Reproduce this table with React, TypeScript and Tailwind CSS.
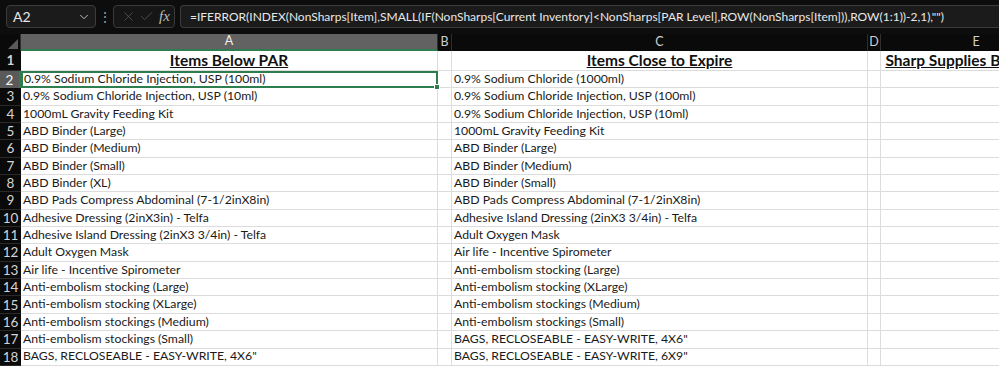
import { ChevronDown, X, Check } from "lucide-react";

const below = [
  "0.9% Sodium Chloride Injection, USP (100ml)",
  "0.9% Sodium Chloride Injection, USP (10ml)",
  "1000mL Gravity Feeding Kit",
  "ABD Binder (Large)",
  "ABD Binder (Medium)",
  "ABD Binder (Small)",
  "ABD Binder (XL)",
  "ABD Pads Compress Abdominal (7-1/2inX8in)",
  "Adhesive Dressing (2inX3in) - Telfa",
  "Adhesive Island Dressing (2inX3 3/4in) - Telfa",
  "Adult Oxygen Mask",
  "Air life - Incentive Spirometer",
  "Anti-embolism stocking (Large)",
  "Anti-embolism stocking (XLarge)",
  "Anti-embolism stockings (Medium)",
  "Anti-embolism stockings (Small)",
  'BAGS, RECLOSEABLE - EASY-WRITE, 4X6"',
];

const expire = [
  "0.9% Sodium Chloride (1000ml)",
  "0.9% Sodium Chloride Injection, USP (100ml)",
  "0.9% Sodium Chloride Injection, USP (10ml)",
  "1000mL Gravity Feeding Kit",
  "ABD Binder (Large)",
  "ABD Binder (Medium)",
  "ABD Binder (Small)",
  "ABD Pads Compress Abdominal (7-1/2inX8in)",
  "Adhesive Island Dressing (2inX3 3/4in) - Telfa",
  "Adult Oxygen Mask",
  "Air life - Incentive Spirometer",
  "Anti-embolism stocking (Large)",
  "Anti-embolism stocking (XLarge)",
  "Anti-embolism stockings (Medium)",
  "Anti-embolism stockings (Small)",
  'BAGS, RECLOSEABLE - EASY-WRITE, 4X6"',
  'BAGS, RECLOSEABLE - EASY-WRITE, 6X9"',
];

const formula =
  '=IFERROR(INDEX(NonSharps[Item],SMALL(IF(NonSharps[Current Inventory]<NonSharps[PAR Level],ROW(NonSharps[Item])),ROW(1:1))-2,1),"")';

function FormulaBar() {
  return (
    <div className="flex h-[34px] items-start bg-[#0d0d0d] pt-[5px] pl-[6px] font-['Lato',sans-serif]">
      <div className="flex h-[23px] w-[90px] shrink-0 items-center justify-between rounded-[4px] border border-[#3c3c3c] bg-[#1b1b1b] pl-[6px] pr-[4px] text-[14px] text-[#e6e6e6]">
        <span>A2</span>
        <ChevronDown size={14} strokeWidth={1.5} className="text-[#cfcfcf]" />
      </div>
      <div className="flex h-[23px] w-[17px] shrink-0 items-center justify-center text-[14px] text-[#9a9a9a]">⋮</div>
      <div className="flex h-[23px] w-[62px] shrink-0 items-center gap-[3px] rounded-[4px] border border-[#3a3a3a] bg-[#161616] pl-[7px]">
        <X size={15} strokeWidth={1.2} className="text-[#5c5c5c]" />
        <Check size={15} strokeWidth={1.2} className="text-[#5c5c5c]" />
        <span className="ml-[2px] font-['Liberation_Serif',serif] text-[15px] italic text-[#bdbdbd]">fx</span>
      </div>
      <div className="ml-[5px] flex h-[23px] min-w-0 flex-1 items-center overflow-hidden whitespace-nowrap rounded-l-[4px] border border-r-0 border-[#3c3c3c] bg-[#1b1b1b] pl-[9px] text-[12px] text-[#e8e8e8]">
        {formula}
      </div>
    </div>
  );
}

function ColHeader() {
  return (
    <div className="flex h-[17px] bg-[#0a0a0a] font-['Lato',sans-serif] text-[12.5px] text-[#cfcfcf]">
      <div className="relative w-[21px] shrink-0 border-r border-[#2e2e2e]">
        <div className="absolute right-[2px] bottom-[2px] h-0 w-0 border-t-[10px] border-r-[10px] border-t-transparent border-r-[#5a5a5a]" />
      </div>
      <div className="flex w-[417px] shrink-0 items-center justify-center border-b-2 border-r border-b-[#2e7d4f] border-r-[#2e2e2e] bg-[#626262] text-[#f0f0f0]">A</div>
      <div className="flex w-[14px] shrink-0 items-center justify-center border-r border-[#2e2e2e]">B</div>
      <div className="flex w-[416px] shrink-0 items-center justify-center border-r border-[#2e2e2e]">C</div>
      <div className="flex w-[13px] shrink-0 items-center justify-center border-r border-[#2e2e2e]">D</div>
      <div className="flex w-[190px] shrink-0 items-center justify-center">E</div>
    </div>
  );
}

function RowNum({ n, selected }: { n: number; selected?: boolean }) {
  return (
    <div
      className={
        selected
          ? "flex w-[21px] shrink-0 items-center justify-center border-r-2 border-r-[#2e7d4f] bg-[#5a5a5a] text-[13.5px] text-[#f4f4f4]"
          : "flex w-[21px] shrink-0 items-center justify-center border-b border-[#2a2a2a] bg-[#0a0a0a] text-[13.5px] text-[#d4d4d4]"
      }
    >
      {n}
    </div>
  );
}

export default function App() {
  return (
    <div className="h-[366px] w-[999px] overflow-hidden bg-white font-['Lato',sans-serif]">
      <FormulaBar />
      <ColHeader />
      <div className="flex h-[20px] text-[15.5px] font-bold text-[#111]">
        <RowNum n={1} />
        <div className="flex w-[417px] shrink-0 items-center justify-center border-r border-b border-[#dcdcdc] underline">Items Below PAR</div>
        <div className="w-[14px] shrink-0 border-r border-b border-[#dcdcdc]" />
        <div className="flex w-[416px] shrink-0 items-center justify-center border-r border-b border-[#dcdcdc] underline">Items Close to Expire</div>
        <div className="w-[13px] shrink-0 border-r border-b border-[#dcdcdc]" />
        <div className="flex w-[190px] shrink-0 items-center justify-center overflow-hidden whitespace-nowrap border-b border-[#dcdcdc] underline">
          Sharp Supplies Below PAR
        </div>
      </div>
      {below.map((item, i) => (
        <div key={i} className="flex h-[17.35px] text-[12.25px] text-[#1a1a1a]">
          <RowNum n={i + 2} selected={i === 0} />
          <div
            className={
              i === 0
                ? "relative flex w-[417px] shrink-0 items-center whitespace-nowrap border-2 border-[#2e7d4f] pl-[1px]"
                : "flex w-[417px] shrink-0 items-center whitespace-nowrap border-r border-b border-[#dcdcdc] pl-[2px]"
            }
          >
            {item}
            {i === 0 && <div className="absolute -right-[4px] -bottom-[4px] h-[6px] w-[6px] border border-white bg-[#2e7d4f]" />}
          </div>
          <div className="w-[14px] shrink-0 border-r border-b border-[#dcdcdc]" />
          <div className="flex w-[416px] shrink-0 items-center whitespace-nowrap border-r border-b border-[#dcdcdc] pl-[2px]">{expire[i]}</div>
          <div className="w-[13px] shrink-0 border-r border-b border-[#dcdcdc]" />
          <div className="w-[190px] shrink-0 border-b border-[#dcdcdc]" />
        </div>
      ))}
    </div>
  );
}
